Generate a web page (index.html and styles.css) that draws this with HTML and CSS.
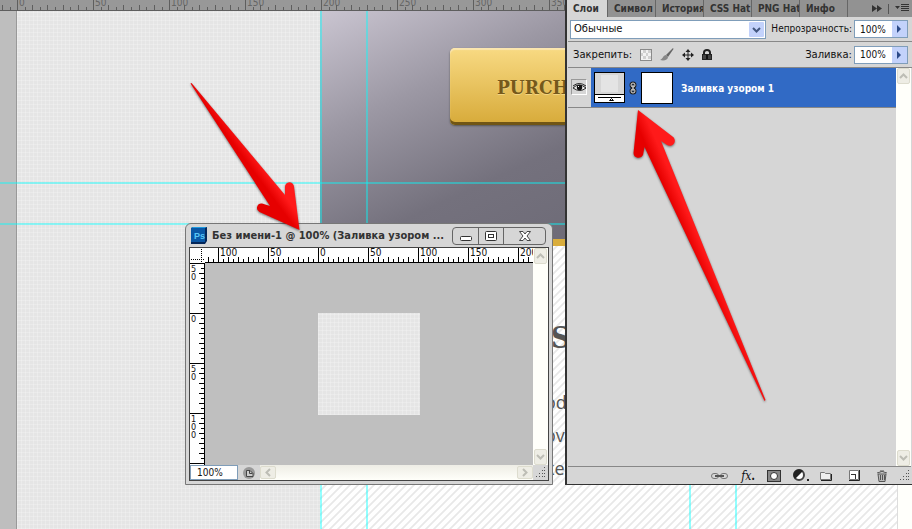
FILE: index.html
```
<!DOCTYPE html>
<html lang="ru">
<head>
<meta charset="utf-8">
<title>Слои</title>
<link rel="stylesheet" href="styles.css">
</head>
<body>
<main class="workspace">
  <section class="document">
    <div class="main-ruler">
      <svg class="ticks" aria-hidden="true">
        <defs>
          <pattern id="mainTicks" x="17" width="76" height="10" patternUnits="userSpaceOnUse">
            <path d="M0 0h1v10h-1zM15 5h1v5h-1zM30 5h1v5h-1zM46 5h1v5h-1zM61 5h1v5h-1zM8 7h1v3h-1zM23 7h1v3h-1zM38 7h1v3h-1zM53 7h1v3h-1zM69 7h1v3h-1z" fill="#5e5e5e"/>
          </pattern>
        </defs>
        <rect width="100%" height="10" fill="url(#mainTicks)"/>
      </svg>
      <div class="main-labels"><span>0</span><span>50</span><span>100</span><span>150</span><span>200</span><span>250</span><span>300</span><span>350</span></div>
    </div>
    <div class="canvas">
      <div class="pasteboard"></div>
      <div class="linen"></div>
      <div class="site">
        <div class="hero"><button class="purchase">PURCH</button></div>
        <div class="copy">
          <h2>S</h2>
          <p>od</p>
          <p>ov</p>
          <p>ke</p>
        </div>
      </div>
      <div class="edge"></div>
      <i class="guide-h guide-h1"></i><i class="guide-h guide-h2"></i>
      <i class="guide-v guide-v1"></i><i class="guide-v guide-v2"></i><i class="guide-v guide-v3"></i><i class="guide-v guide-v4"></i>
    </div>
  </section>

  <section class="window">
    <header class="titlebar">
      <svg class="ps" viewBox="0 0 16 17" aria-hidden="true">
        <path d="M0 1l2-1h14v14l-2 3H0z" fill="#04275a"/><path d="M0 1h14v14H0z" fill="#0a57a5"/><path d="M0 1l2-1h14l-2 1z" fill="#1f9be0"/>
        <text x="3" y="12" class="ps-text">Ps</text>
      </svg>
      <h1>Без имени-1 @ 100% (Заливка узором ...</h1>
      <div class="window-buttons">
        <button aria-label="Свернуть"><svg width="14" height="12"><rect x="1.500" y="6.500" width="11" height="4" rx="1" fill="#fff" stroke="#333"/></svg></button>
        <button aria-label="Развернуть"><svg width="14" height="12"><rect x="1.500" y="1.500" width="11" height="9" rx="1" fill="#fff" stroke="#333"/><rect x="4.500" y="4.500" width="5" height="3" fill="#fff" stroke="#333"/></svg></button>
        <button aria-label="Закрыть"><svg width="14" height="12"><path d="M1.500 1.500h3.500l2 2.500 2-2.500h3.500L9 6l3.500 4.500H9L7 8l-2 2.500H1.500L5 6z" fill="#fff" stroke="#444"/></svg></button>
      </div>
    </header>
    <div class="window-body">
      <svg class="corner" width="14" height="14" aria-hidden="true"><path d="M11.500 1v13M1 11.500h13" stroke="#000" stroke-dasharray="1 1"/></svg>
      <div class="ruler-x">
        <svg class="ticks" aria-hidden="true">
          <defs><pattern id="xTicks" x="13" width="50" height="14" patternUnits="userSpaceOnUse"><path d="M0 0h1v14h-1zM10 9h1v5h-1zM20 9h1v5h-1zM30 9h1v5h-1zM40 9h1v5h-1zM5 11h1v3h-1zM15 11h1v3h-1zM25 11h1v3h-1zM35 11h1v3h-1zM45 11h1v3h-1z"/></pattern></defs>
          <rect width="100%" height="14" fill="url(#xTicks)"/>
        </svg>
        <div class="x-labels"><span>100</span><span>50</span><span>0</span><span>50</span><span>100</span><span>150</span><span>200</span></div>
      </div>
      <div class="scroll-y">
        <button aria-label="Вверх"><svg width="9" height="6"><path d="M1 5l3.500-3.500L8 5" class="chev"/></svg></button>
        <button aria-label="Вниз"><svg width="9" height="6"><path d="M1 1l3.500 3.500L8 1" class="chev"/></svg></button>
      </div>
      <div class="ruler-y">
        <svg class="ticks" aria-hidden="true">
          <defs><pattern id="yTicks" width="14" height="50" patternUnits="userSpaceOnUse"><path d="M0 0h14v1H0zM9 10h5v1H9zM9 20h5v1H9zM9 30h5v1H9zM9 40h5v1H9zM11 5h3v1h-3zM11 15h3v1h-3zM11 25h3v1h-3zM11 35h3v1h-3zM11 45h3v1h-3z"/></pattern></defs>
          <rect width="14" height="100%" fill="url(#yTicks)"/>
        </svg>
        <div class="y-labels"><span>5<br>0</span><span>0</span><span>5<br>0</span><span>1<br>0<br>0</span></div>
      </div>
      <div class="view"><div class="linen swatch"></div></div>
      <div class="status">
        <input class="zoom" aria-label="Масштаб" value="100%">
        <button class="info" aria-label="Сведения"><svg width="14" height="14"><circle cx="7" cy="7" r="6" fill="#999"/><path d="M4.500 10.500v-6h3.500l3 3v3z" fill="#ccc" stroke="#444"/><path d="M7.500 4.500v3h3" fill="none" stroke="#444"/></svg></button>
        <div class="scroll-x">
          <button aria-label="Влево"><svg width="6" height="9"><path d="M5 1L1.500 4.500 5 8" class="chev"/></svg></button>
          <button aria-label="Вправо"><svg width="6" height="9"><path d="M1 1l3.500 3.500L1 8" class="chev"/></svg></button>
        </div>
      </div>
      <div class="grip"><svg width="11" height="11" aria-hidden="true"><path d="M9 0h1v1h-1zM7 3h1v1h-1zM9 3h1v1h-1zM4 6h1v1h-1zM7 6h1v1h-1zM9 6h1v1h-1zM1 9h1v1h-1zM4 9h1v1h-1zM7 9h1v1h-1zM9 9h1v1h-1z" fill="#555"/></svg></div>
    </div>
  </section>

  <aside class="panel">
    <nav class="tabs">
      <button class="tab active">Слои</button><button class="tab">Символ</button><button class="tab">История</button><button class="tab">CSS Hat</button><button class="tab">PNG Hat</button><button class="tab">Инфо</button>
      <div class="tab-tools">
        <button aria-label="Свернуть панель"><svg width="10" height="7"><path d="M0 0l5 3.500L0 7zM5 0l5 3.500L5 7z" fill="#333"/></svg></button>
        <i></i>
        <button aria-label="Меню панели"><svg width="14" height="9"><path d="M0 2h5L2.500 5zM6 0h8v1H6zM6 2h8v1H6zM6 4h8v1H6zM6 6h8v1H6z" fill="#333"/></svg></button>
      </div>
    </nav>
    <div class="options">
      <div class="combo">
        <select aria-label="Режим наложения"><option>Обычные</option></select>
        <svg class="combo-arrow" width="15" height="15" aria-hidden="true"><rect width="15" height="15" rx="1" fill="#c3d2fb"/><path d="M4 6l3.500 3.500L11 6" fill="none" stroke="#43577f" stroke-width="2"/></svg>
      </div>
      <label class="value">Непрозрачность:<input value="100%"></label>
      <button class="step" aria-label="Непрозрачность"><svg width="5" height="8"><path d="M0 0l4 4-4 4z" fill="#2c4a87"/></svg></button>
    </div>
    <div class="options locks">
      <span class="lock-label">Закрепить:</span>
      <button aria-label="Прозрачные пикселы"><svg width="12" height="12"><rect x=".5" y=".5" width="11" height="11" fill="#f2f2f2" stroke="#8a8a8a"/><path d="M3 1h3v3H3zM8 1h3v3H8zM1 4h2v3H1zM6 4h2v3H6zM3 7h3v3H3zM8 7h3v3H8z" fill="#d0d0d0"/></svg></button>
      <button aria-label="Цвета пикселов"><svg width="14" height="13"><path d="M13 0L6 7l2 2 5.500-8z" fill="#666"/><path d="M6 7c-3 0-3 4-6 5 4 1 8 0 8-3z" fill="#888"/></svg></button>
      <button aria-label="Положение"><svg width="12" height="12"><path d="M6 0l2.500 3h-2v2.500H9v-2L12 6 9 8.500v-2H6.500V9h2L6 12 3.500 9h2V6.500H3v2L0 6l3-2.500v2h2.500V3h-2z" fill="#222"/></svg></button>
      <button aria-label="Всё"><svg width="10" height="11"><path d="M2 5V3.500a3 2.500 0 0 1 6 0V5" fill="none" stroke="#222" stroke-width="2"/><path d="M0 5h10v6H0z" fill="#222"/><path d="M1 7h8M1 9h8" stroke="#666"/><path d="M4 6h2v4H4z" fill="#111"/></svg></button>
      <label class="value">Заливка:<input value="100%"></label>
      <button class="step" aria-label="Заливка"><svg width="5" height="8"><path d="M0 0l4 4-4 4z" fill="#2c4a87"/></svg></button>
    </div>
    <div class="list">
      <div class="layers">
        <div class="layer">
          <button class="eye" aria-label="Видимость"><svg width="13" height="11"><path d="M0 6Q6 0 13 6 7 11 0 6z" fill="#eee" stroke="#222"/><circle cx="6.500" cy="5.500" r="2.700" fill="#111"/><path d="M0 4Q6-1 13 4" fill="none" stroke="#222"/><path d="M5 4h1v1H5z" fill="#fff"/></svg></button>
          <div class="layer-main">
            <svg width="31" height="31" aria-hidden="true"><rect x=".5" y=".5" width="30" height="30" fill="#d6d6d6" stroke="#000"/><rect x="7" y="3" width="17" height="17" fill="#e4e4e4"/><path d="M1 22h29v8H1z" fill="#fff"/><path d="M0 22.500h31M4 25.500h23" stroke="#000"/><path d="M17.500 26.500l-2 2h4z" fill="#fff" stroke="#000"/></svg>
            <svg width="8" height="14" aria-hidden="true"><g fill="none" stroke="#222" stroke-width="3"><rect x="2" y="2" width="4" height="4" rx="2"/><rect x="2" y="8" width="4" height="4" rx="2"/></g><g fill="none" stroke="#ddd"><rect x="2" y="2" width="4" height="4" rx="2"/><rect x="2" y="8" width="4" height="4" rx="2"/><path d="M4 4v6"/></g></svg>
            <svg width="32" height="32" aria-hidden="true"><rect x=".5" y=".5" width="31" height="31" fill="#fff" stroke="#000"/></svg>
            <span>Заливка узором 1</span>
          </div>
        </div>
      </div>
      <div class="scroll-y">
        <button aria-label="Вверх"><svg width="9" height="6"><path d="M1 5l3.500-3.500L8 5" class="chev"/></svg></button>
        <button aria-label="Вниз"><svg width="9" height="6"><path d="M1 1l3.500 3.500L8 1" class="chev"/></svg></button>
      </div>
    </div>
    <footer class="actions">
      <button aria-label="Связать слои"><svg width="19" height="8"><g fill="none" stroke="#777"><rect x="1.500" y="1.500" width="7" height="5" rx="2.500"/><rect x="10.500" y="1.500" width="7" height="5" rx="2.500"/></g><path d="M5 4h9" stroke="#555" stroke-width="2"/></svg></button>
      <button class="fx" aria-label="Стиль слоя"><em>fx</em><b>.</b></button>
      <button aria-label="Маска"><svg width="14" height="12"><rect x=".5" y=".5" width="13" height="11" fill="#888" stroke="#333"/><circle cx="7" cy="6" r="3.500" fill="#fff" stroke="#333"/></svg></button>
      <button class="adjust" aria-label="Корректирующий слой"><svg width="17" height="13"><circle cx="6" cy="6" r="5" fill="#fff" stroke="#444" stroke-width="2"/><path d="M2 10A5.500 5.500 0 0 1 10 2z" fill="#222"/><path d="M14 10h2v2h-2z" fill="#222"/></svg></button>
      <button aria-label="Группа"><svg width="12" height="10"><path d="M.5 8.500v-7h4l1 1h5v6z" fill="#eee" stroke="#777"/><path d="M1 9.500h10.500V3" fill="none" stroke="#222"/></svg></button>
      <button aria-label="Новый слой"><svg width="11" height="11"><path d="M.5.5h9v9h-9z" fill="#fff" stroke="#777"/><path d="M0 10.500h10.500V0" fill="none" stroke="#222"/><path d="M2 4h5v5H6V5H2z" fill="#333"/></svg></button>
      <button aria-label="Удалить"><svg width="10" height="12"><path d="M1 4h8L8 11.500H2z" fill="#bbb" stroke="#555"/><path d="M0 3Q5 0 10 3M3 1h4M3.500 5v5M5.500 5v5M7.500 5v5" fill="none" stroke="#555"/></svg></button>
      <svg class="panel-grip" width="11" height="11" aria-hidden="true"><path d="M9 0h1v1h-1zM7 3h1v1h-1zM9 3h1v1h-1zM4 6h1v1h-1zM7 6h1v1h-1zM9 6h1v1h-1zM1 9h1v1h-1zM4 9h1v1h-1zM7 9h1v1h-1zM9 9h1v1h-1z" fill="#555"/></svg>
    </footer>
  </aside>

  <svg class="arrows" aria-hidden="true">
    <defs>
      <linearGradient id="redA" gradientUnits="userSpaceOnUse" x1="251" y1="180" x2="270" y2="166"><stop offset=".3" stop-color="#e60000"/><stop offset=".75" stop-color="#ff1a1a"/></linearGradient>
      <linearGradient id="redB" gradientUnits="userSpaceOnUse" x1="667" y1="198" x2="683" y2="191"><stop offset=".1" stop-color="#e60000"/><stop offset=".75" stop-color="#ff1a1a"/></linearGradient>
    </defs>
    <path d="M190.500 83.500L191.500 83 285 195V187A4.500 4.500 0 0 1 294 186.500L299.500 230 259.500 212A4.500 4.500 0 0 1 262 203.500L270 206z" fill="url(#redA)"/>
    <path d="M638 110L672.500 136.500A5 5 0 0 1 667 145L661 141 765.500 400 764.500 401 644.500 147 643 155A5 5 0 0 1 633.500 153z" fill="url(#redB)"/>
  </svg>
</main>
</body>
</html>
```
FILE: styles.css
```
* { box-sizing: border-box; }
html, body { margin: 0; height: 100%; }
body { font: 10px/12px "DejaVu Sans", Verdana, sans-serif; color: #111; overflow: hidden; }
button { appearance: none; margin: 0; padding: 0; border: 0; background: none; font: inherit; color: inherit; display: flex; align-items: center; justify-content: center; }
input, select { appearance: none; margin: 0; border: 0; border-radius: 0; background: #fff; font: inherit; color: inherit; min-width: 0; }
svg { display: block; flex: none; }
h1, h2, p { margin: 0; }

.workspace { position: relative; min-height: 100vh; overflow: hidden; }
.document { height: 100vh; display: flex; flex-direction: column; }

.main-ruler { position: relative; height: 11px; flex: none; background: #989898; border-bottom: 1px solid #5e5e5e; overflow: hidden; }
.ticks { position: absolute; inset: 0; width: 100%; height: 100%; }
.main-labels { display: flex; padding-left: 19px; margin-top: -3px; color: #666; font: 10px/12px "DejaVu Sans Condensed", sans-serif; }
.main-labels span { width: 76px; flex: none; }

.canvas { position: relative; flex: 1; display: grid; grid-template-columns: 17px 303px 1fr 15px; min-height: 0; }
.pasteboard { background: #bebebe; border-right: 1px solid #999; }
.linen {
  background:
    repeating-linear-gradient(0deg, rgba(255,255,255,.22) 0 1px, transparent 1px 4px),
    repeating-linear-gradient(90deg, rgba(255,255,255,.22) 0 1px, transparent 1px 4px),
    #e5e5e5;
}
.site { overflow: hidden; background: #fff linear-gradient(135deg, #e8e8e8 0 4%, #fff 12% 38%, #e8e8e8 46% 54%, #fff 62% 88%, #e8e8e8 96%) 0 0 / 8px 8px; }
.hero { height: 235px; padding: 37px 0 0 130px; background: linear-gradient(155deg, #cac5d1 0, #9c98a4 25%, #74717d 50%, #65636f 100%); border-bottom: 7px solid #d9ad3c; }
.purchase { width: 240px; height: 77px; padding: 0 0 0 47px; justify-content: flex-start; border-radius: 5px; background: linear-gradient(#f8da83, #d7aa39); box-shadow: inset 0 2px 1px #fbe6b0, inset 0 -3px 0 #705515, 0 1px 2px #555; color: #75591b; font: bold 19px/24px "DejaVu Serif Condensed", "DejaVu Serif", serif; text-shadow: 0 1px 0 #f3d581; }
.copy { padding: 76px 0 0 225px; color: #555; font: 18px/33px "Open Sans", sans-serif; }
.copy h2 { font: bold 30px/32px "DejaVu Serif Condensed", serif; margin: 0 0 32px 6px; }
.edge { background: #fffffb; border-left: 1px solid #ddd; }
.guide-h, .guide-v { position: absolute; background: #00ffff; opacity: .42; }
.guide-h { left: 0; right: 0; height: 2px; }
.guide-v { top: 0; bottom: 0; width: 2px; }
.guide-h1 { top: 171px; }
.guide-h2 { top: 212px; }
.guide-v1 { left: 320px; }
.guide-v2 { left: 366px; }
.guide-v3 { left: 689px; }
.guide-v4 { left: 735px; }

.window { position: absolute; left: 185px; top: 223px; width: 368px; padding: 0 3px 3px; border: 1px solid #777; border-radius: 6px 6px 0 0; background: #d6d6d6; }
.titlebar { display: flex; align-items: center; height: 23px; padding: 0 3px 0 2px; gap: 5px; }
.ps { width: 16px; height: 17px; }
.ps-text { font: bold 9px "Liberation Sans", sans-serif; fill: #58c6f5; }
h1 { flex: 1; min-width: 0; white-space: nowrap; color: #333; font: bold 11px/16px "DejaVu Sans Condensed", sans-serif; }
.window-buttons { display: flex; border: 1px solid #666; border-radius: 4px; height: 18px; }
.window-buttons button { width: 25px; border-left: 1px solid #666; }
.window-buttons button:first-child { border-left: 0; }
.window-buttons button:last-child { width: 42px; }
.window-body { display: grid; grid-template: 15px 202px 15px / 15px 1fr 15px; border: 1px solid #444; background: #fff; }
.ruler-x { position: relative; overflow: hidden; border-bottom: 1px solid #000; }
.x-labels { display: flex; padding-left: 15px; }
.x-labels span { width: 50px; flex: none; font: 10px/10px "DejaVu Sans Condensed", sans-serif; }
.ruler-y { position: relative; overflow: hidden; border-right: 1px solid #000; }
.y-labels { display: flex; flex-direction: column; padding-left: 1px; font: 9px/8px "DejaVu Sans Condensed", sans-serif; }
.y-labels span { height: 50px; flex: none; padding-top: 2px; }
.scroll-y { grid-column: 3; grid-row: 1 / 3; display: flex; flex-direction: column; justify-content: space-between; align-items: center; background: #fffffa; }
.scroll-y button { width: 13px; height: 16px; border: 1px solid #dddcce; border-radius: 2px; background: #eeede5; }
.chev { fill: none; stroke: #bdbdb5; stroke-width: 2; }
.view { grid-column: 2; grid-row: 2; background: #bfbfbf; padding: 50px 0 0 113px; }
.ruler-y { grid-column: 1; grid-row: 2; }
.swatch { width: 102px; height: 102px; }
.status { grid-column: 1 / 3; display: flex; background: #d6d6d6; }
.zoom { width: 48px; padding: 0 0 0 6px; border: 1px solid #7f9db9; font: 10px/12px "DejaVu Sans Condensed", sans-serif; }
.info { width: 22px; }
.scroll-x { flex: 1; display: flex; justify-content: space-between; align-items: center; background: linear-gradient(#eeede5, #fffffa); }
.scroll-x button { width: 16px; height: 13px; border: 1px solid #dddcce; border-radius: 2px; background: #eeede5; }
.grip { display: flex; align-items: center; justify-content: center; background: #d6d6d6; }

.panel { position: absolute; right: 0; top: 0; width: 347px; border-left: 2px solid #333; border-bottom: 1px solid #333; background: #d6d6d6; padding-left: 1px; }
.tabs { display: flex; height: 17px; background: #929292; color: #333; font: bold 10px/17px "DejaVu Sans Condensed", sans-serif; }
.tab { width: 48px; flex: none; overflow: hidden; white-space: nowrap; justify-content: flex-start; padding-left: 6px; border-right: 1px solid #666; }
.tab.active { width: 40px; padding-left: 5px; background: #d6d6d6; }
.tab-tools { flex: 1; display: flex; align-items: center; justify-content: flex-end; gap: 6px; padding-right: 3px; }
.tab-tools i { width: 1px; height: 10px; background: #555; }
.options { display: flex; align-items: center; height: 25px; padding: 0 4px 0 2px; border-bottom: 1px solid #888; }
.combo { position: relative; width: 196px; height: 19px; }
.combo select { width: 100%; height: 100%; padding: 0 20px 0 3px; border: 1px solid #7f9db9; }
.combo-arrow { position: absolute; right: 2px; top: 2px; }
.value { display: flex; align-items: center; gap: 2px; margin-left: auto; white-space: nowrap; }
.value input { width: 38px; height: 18px; padding: 0 0 0 5px; border: 1px solid #7f9db9; border-right: 0; font: 10px/12px "DejaVu Sans Condensed", sans-serif; }
.options:not(.locks) .value { font-family: "DejaVu Sans Condensed", sans-serif; }
.step { width: 16px; height: 18px; border: 1px solid #7f9db9; border-left: 0; background: #c3d2fb; }
.locks { height: 26px; gap: 8px; }
.lock-label { padding-left: 3px; }
.locks .step { margin-left: -8px; }
.list { display: flex; height: 399px; border-bottom: 1px solid #888; margin-right: 1px; }
.layers { flex: 1; }
.layer { display: flex; height: 40px; border-bottom: 1px solid #888; }
.eye { width: 16px; height: 16px; margin: 11px 4px 0 3px; border: 1px solid #999; border-right-color: #fff; border-bottom-color: #fff; }
.layer-main { flex: 1; display: flex; align-items: center; gap: 4px; padding-left: 3px; background: #316ac5; color: #fff; font: bold 10px/14px "DejaVu Sans Condensed", sans-serif; }
.layer-main span { padding-left: 4px; padding-top: 3px; }
.list .scroll-y { width: 15px; }
.actions { display: flex; align-items: center; justify-content: flex-end; height: 17px; padding-right: 2px; gap: 14px; }
.actions button:nth-child(-n+3) { margin-right: -2px; }
.actions .adjust { margin-right: -4px; }
.fx { font: 12px/16px "DejaVu Serif Condensed", serif; }
.actions button:nth-child(6) { margin: 0 3px; }
.panel-grip { margin-left: -2px; }

.arrows { position: absolute; inset: 0; width: 100%; height: 100%; pointer-events: none; filter: drop-shadow(0 1px 1px rgba(0,0,0,.5)); }
```
